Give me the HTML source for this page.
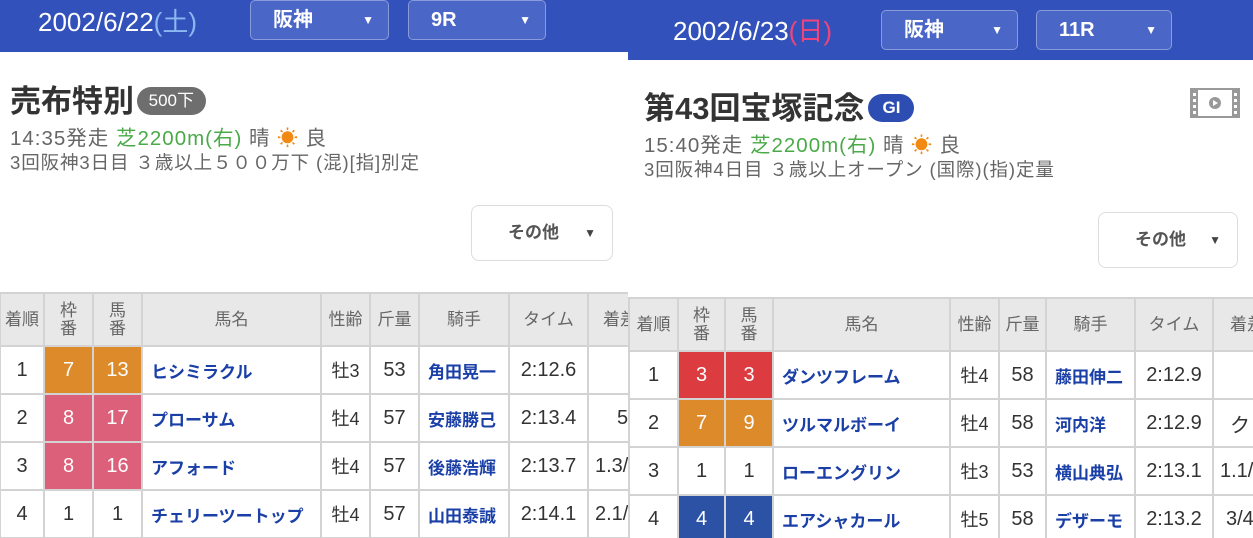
<!DOCTYPE html>
<html><head><meta charset="utf-8"><style>
*{margin:0;padding:0;box-sizing:border-box}
body{width:1253px;height:538px;overflow:hidden;background:#fff;font-family:"Liberation Sans","Noto Sans CJK JP",sans-serif;position:relative}
.p{position:absolute;top:0;height:538px;overflow:hidden;background:#fff}
.a{position:absolute}
.hdr{position:absolute;left:0;top:0;background:#3251bb}
.date{position:absolute;color:#fff;font-size:26px;white-space:nowrap}
.sel{position:absolute;background:#4a66c6;border:1.5px solid rgba(255,255,255,.35);border-radius:5px;color:#fff;font-weight:bold;font-size:20px;height:40px;line-height:38px;padding-left:22px}
.sel:after{content:"▼";position:absolute;right:14px;top:0;font-size:12px}
.title{position:absolute;font-size:31px;font-weight:bold;color:#333;white-space:nowrap}
.badge{display:inline-block;vertical-align:middle;color:#fff;font-size:17px;font-weight:normal;border-radius:14px;height:28px;line-height:28px;padding:0 10px;position:relative;top:-3px}
.l2{position:absolute;font-size:20.5px;color:#666;white-space:nowrap;letter-spacing:1px}
.l3{position:absolute;font-size:18.5px;color:#666;white-space:nowrap;letter-spacing:0.9px}
.g{color:#4aaa48}
.sun{color:#f28a12}
.oth{position:absolute;border:1.5px solid #ddd;border-radius:8px;font-size:17px;font-weight:bold;color:#555;height:56px;line-height:54px;padding-left:36px}
.oth:after{content:"▼";position:absolute;right:16px;top:0;font-size:12px;color:#444}
table{position:absolute;border-collapse:collapse;table-layout:fixed}
td,th{border:2px solid #d3d3d3;text-align:center;font-size:20px;color:#333;height:48px;white-space:nowrap;overflow:hidden;font-weight:normal}
th{background:#e8e8e8;color:#666;font-size:17px;line-height:18px;height:53px}
td.n{text-align:left;padding-left:8px;color:#1a3fa6;font-weight:bold;font-size:17px}
td.j{color:#1a3fa6;font-weight:bold;font-size:17px;text-align:left;padding-left:8px}
td.c{color:#fff}
.o{background:#dd8a2a}.k{background:#dc6079}.r{background:#dc3c3f}.b{background:#2c52a6}
td.sx{font-size:18px}
</style></head><body>

<div class="p" style="left:0;width:628px">
  <div class="hdr" style="width:628px;height:52px"></div>
  <div class="date" style="left:38px;top:2px">2002/6/22<span style="color:#8cb8f2">(土)</span></div>
  <div class="sel" style="left:250px;top:0;width:139px">阪神</div>
  <div class="sel" style="left:408px;top:0;width:138px">9R</div>
  <div class="title" style="left:10px;top:76px">売布特別 <span class="badge" style="background:#6e6e6e;margin-left:-6px;padding:0 12px">500下</span></div>
  <div class="l2" style="left:10px;top:121px">14:35発走 <span class="g">芝2200m(右)</span> 晴 <span class="sun">☀</span> 良</div>
  <div class="l3" style="left:10px;top:149px">3回阪神3日目 ３歳以上５００万下 (混)[指]別定</div>
  <div class="oth" style="left:471px;top:205px;width:142px">その他</div>
  <table style="left:-1px;top:292px;width:670px">
    <colgroup><col style="width:44px"><col style="width:49px"><col style="width:49px"><col style="width:179px"><col style="width:49px"><col style="width:49px"><col style="width:90px"><col style="width:79px"><col style="width:82px"></colgroup>
    <tr><th>着順</th><th>枠<br>番</th><th>馬<br>番</th><th>馬名</th><th>性齢</th><th>斤量</th><th>騎手</th><th>タイム</th><th style="text-align:left;padding-left:14px">着差</th></tr>
    <tr><td>1</td><td class="c o">7</td><td class="c o">13</td><td class="n">ヒシミラクル</td><td class="sx">牡3</td><td>53</td><td class="j">角田晃一</td><td>2:12.6</td><td></td></tr>
    <tr><td>2</td><td class="c k">8</td><td class="c k">17</td><td class="n">プローサム</td><td class="sx">牡4</td><td>57</td><td class="j">安藤勝己</td><td>2:13.4</td><td style="text-align:left;padding-left:28px">5</td></tr>
    <tr><td>3</td><td class="c k">8</td><td class="c k">16</td><td class="n">アフォード</td><td class="sx">牡4</td><td>57</td><td class="j">後藤浩輝</td><td>2:13.7</td><td style="text-align:left;padding-left:6px">1.3/4</td></tr>
    <tr><td>4</td><td>1</td><td>1</td><td class="n">チェリーツートップ</td><td class="sx">牡4</td><td>57</td><td class="j">山田泰誠</td><td>2:14.1</td><td style="text-align:left;padding-left:6px">2.1/2</td></tr>
  </table>
</div>

<div class="p" style="left:628px;width:625px">
  <div class="hdr" style="width:625px;height:60px"></div>
  <div class="date" style="left:45px;top:11px">2002/6/23<span style="color:#f0457a">(日)</span></div>
  <div class="sel" style="left:253px;top:10px;width:137px">阪神</div>
  <div class="sel" style="left:408px;top:10px;width:136px">11R</div>
  <div class="title" style="left:16px;top:83px">第43回宝塚記念<span class="badge" style="background:#2e4db2;margin-left:4px;padding:0 14px;font-weight:bold">GI</span></div>
  <svg class="a" style="left:562px;top:88px" width="50" height="30" viewBox="0 0 50 30"><rect x="1" y="1" width="48" height="28" fill="none" stroke="#999" stroke-width="2"/><rect x="1" y="1" width="7" height="28" fill="#999"/><rect x="42" y="1" width="7" height="28" fill="#999"/><g fill="#fff"><rect x="3" y="5" width="3" height="3"/><rect x="3" y="11" width="3" height="3"/><rect x="3" y="17" width="3" height="3"/><rect x="3" y="23" width="3" height="3"/><rect x="44" y="5" width="3" height="3"/><rect x="44" y="11" width="3" height="3"/><rect x="44" y="17" width="3" height="3"/><rect x="44" y="23" width="3" height="3"/></g><circle cx="25" cy="15" r="6" fill="#999"/><path d="M23 12 L28 15 L23 18Z" fill="#fff"/></svg>
  <div class="l2" style="left:16px;top:128px">15:40発走 <span class="g">芝2200m(右)</span> 晴 <span class="sun">☀</span> 良</div>
  <div class="l3" style="left:16px;top:156px">3回阪神4日目 ３歳以上オープン (国際)(指)定量</div>
  <div class="oth" style="left:470px;top:212px;width:140px">その他</div>
  <table style="left:0;top:297px;width:670px">
    <colgroup><col style="width:49px"><col style="width:47px"><col style="width:48px"><col style="width:177px"><col style="width:49px"><col style="width:47px"><col style="width:89px"><col style="width:78px"><col style="width:86px"></colgroup>
    <tr><th>着順</th><th>枠<br>番</th><th>馬<br>番</th><th>馬名</th><th>性齢</th><th>斤量</th><th>騎手</th><th>タイム</th><th style="text-align:left;padding-left:16px">着差</th></tr>
    <tr><td>1</td><td class="c r">3</td><td class="c r">3</td><td class="n">ダンツフレーム</td><td class="sx">牡4</td><td>58</td><td class="j">藤田伸二</td><td>2:12.9</td><td></td></tr>
    <tr><td>2</td><td class="c o">7</td><td class="c o">9</td><td class="n">ツルマルボーイ</td><td class="sx">牡4</td><td>58</td><td class="j">河内洋</td><td>2:12.9</td><td style="text-align:left;padding-left:16px">クビ</td></tr>
    <tr><td>3</td><td>1</td><td>1</td><td class="n">ローエングリン</td><td class="sx">牡3</td><td>53</td><td class="j">横山典弘</td><td>2:13.1</td><td style="text-align:left;padding-left:6px">1.1/4</td></tr>
    <tr><td>4</td><td class="c b">4</td><td class="c b">4</td><td class="n">エアシャカール</td><td class="sx">牡5</td><td>58</td><td class="j">デザーモ</td><td>2:13.2</td><td style="text-align:left;padding-left:12px">3/4</td></tr>
  </table>
</div>
</body></html>
